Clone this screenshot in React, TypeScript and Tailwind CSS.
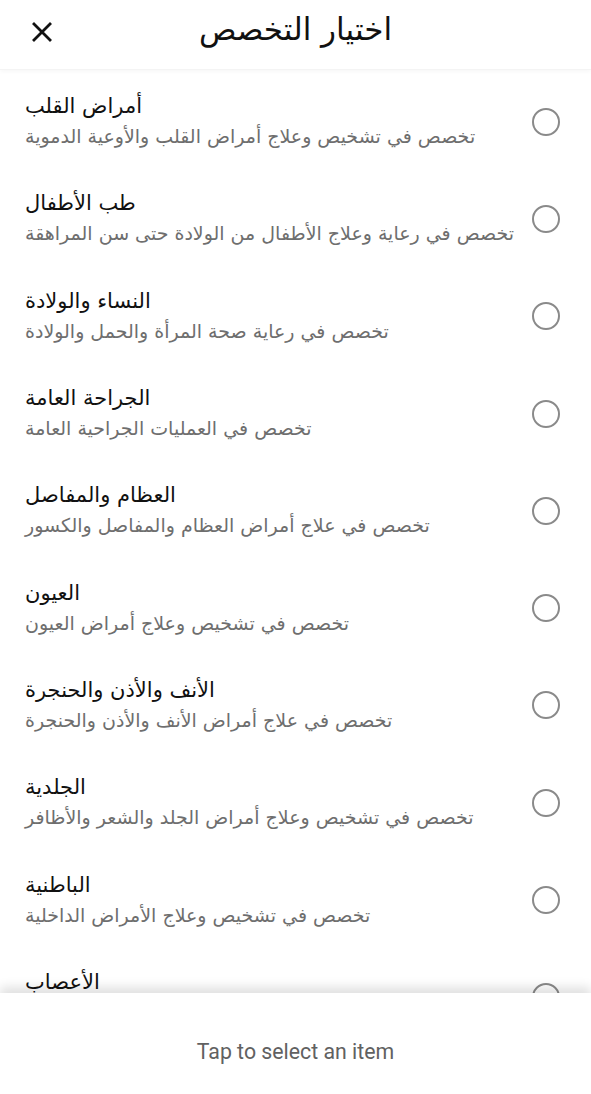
import React from "react";

const items = [
  ["أمراض القلب", "تخصص في تشخيص وعلاج أمراض القلب والأوعية الدموية"],
  ["طب الأطفال", "تخصص في رعاية وعلاج الأطفال من الولادة حتى سن المراهقة"],
  ["النساء والولادة", "تخصص في رعاية صحة المرأة والحمل والولادة"],
  ["الجراحة العامة", "تخصص في العمليات الجراحية العامة"],
  ["العظام والمفاصل", "تخصص في علاج أمراض العظام والمفاصل والكسور"],
  ["العيون", "تخصص في تشخيص وعلاج أمراض العيون"],
  ["الأنف والأذن والحنجرة", "تخصص في علاج أمراض الأنف والأذن والحنجرة"],
  ["الجلدية", "تخصص في تشخيص وعلاج أمراض الجلد والشعر والأظافر"],
  ["الباطنية", "تخصص في تشخيص وعلاج الأمراض الداخلية"],
  ["الأعصاب", "تخصص في تشخيص وعلاج أمراض الجهاز العصبي"],
];

const AR = { fontFamily: '"DejaVu Sans", sans-serif' };

export default function App() {
  return (
    <div className="w-[591px] h-[1094px] bg-white flex flex-col overflow-hidden relative">
      <div className="h-[70px] shrink-0 flex items-center relative bg-white z-10 shadow-[0_2px_4px_rgba(0,0,0,0.03)] border-b border-[#f4f4f4]">
        <button className="absolute left-[30px] top-[20px] w-[24px] h-[24px] flex items-center justify-center">
          <svg width="22" height="22" viewBox="0 0 22 22">
            <path d="M3 3 L19 19 M19 3 L3 19" stroke="#111" strokeWidth="2.8" strokeLinecap="square" />
          </svg>
        </button>
        <div className="w-full text-center text-[31px] text-[#111] leading-none -mt-[11px]" style={AR}>
          اختيار التخصص
        </div>
      </div>
      <div className="flex-1 overflow-hidden pt-[3px]">
        {items.map(([t, s], i) => (
          <div key={i} className="h-[97.3px] flex items-center pl-[25px] pr-[31px]">
            <div className="flex-1 flex flex-col items-start -mt-[2px]">
              <div className="text-[21px] text-[#111] leading-[26px]" dir="rtl" style={AR}>{t}</div>
              <div className="text-[19px] text-[#6e6e6e] leading-[24px] mt-[5px]" dir="rtl" style={AR}>{s}</div>
            </div>
            <div className="w-[28px] h-[28px] rounded-full border-[2.5px] border-[#8a8a8a]" />
          </div>
        ))}
      </div>
      <div className="h-[101px] shrink-0 bg-white relative flex items-center justify-center shadow-[0_-6px_10px_rgba(0,0,0,0.12)] z-10">
        <span className="text-[21.3px] text-[#616161] mt-[16px]" style={{ fontFamily: "Roboto, sans-serif" }}>
          Tap to select an item
        </span>
      </div>
    </div>
  );
}
